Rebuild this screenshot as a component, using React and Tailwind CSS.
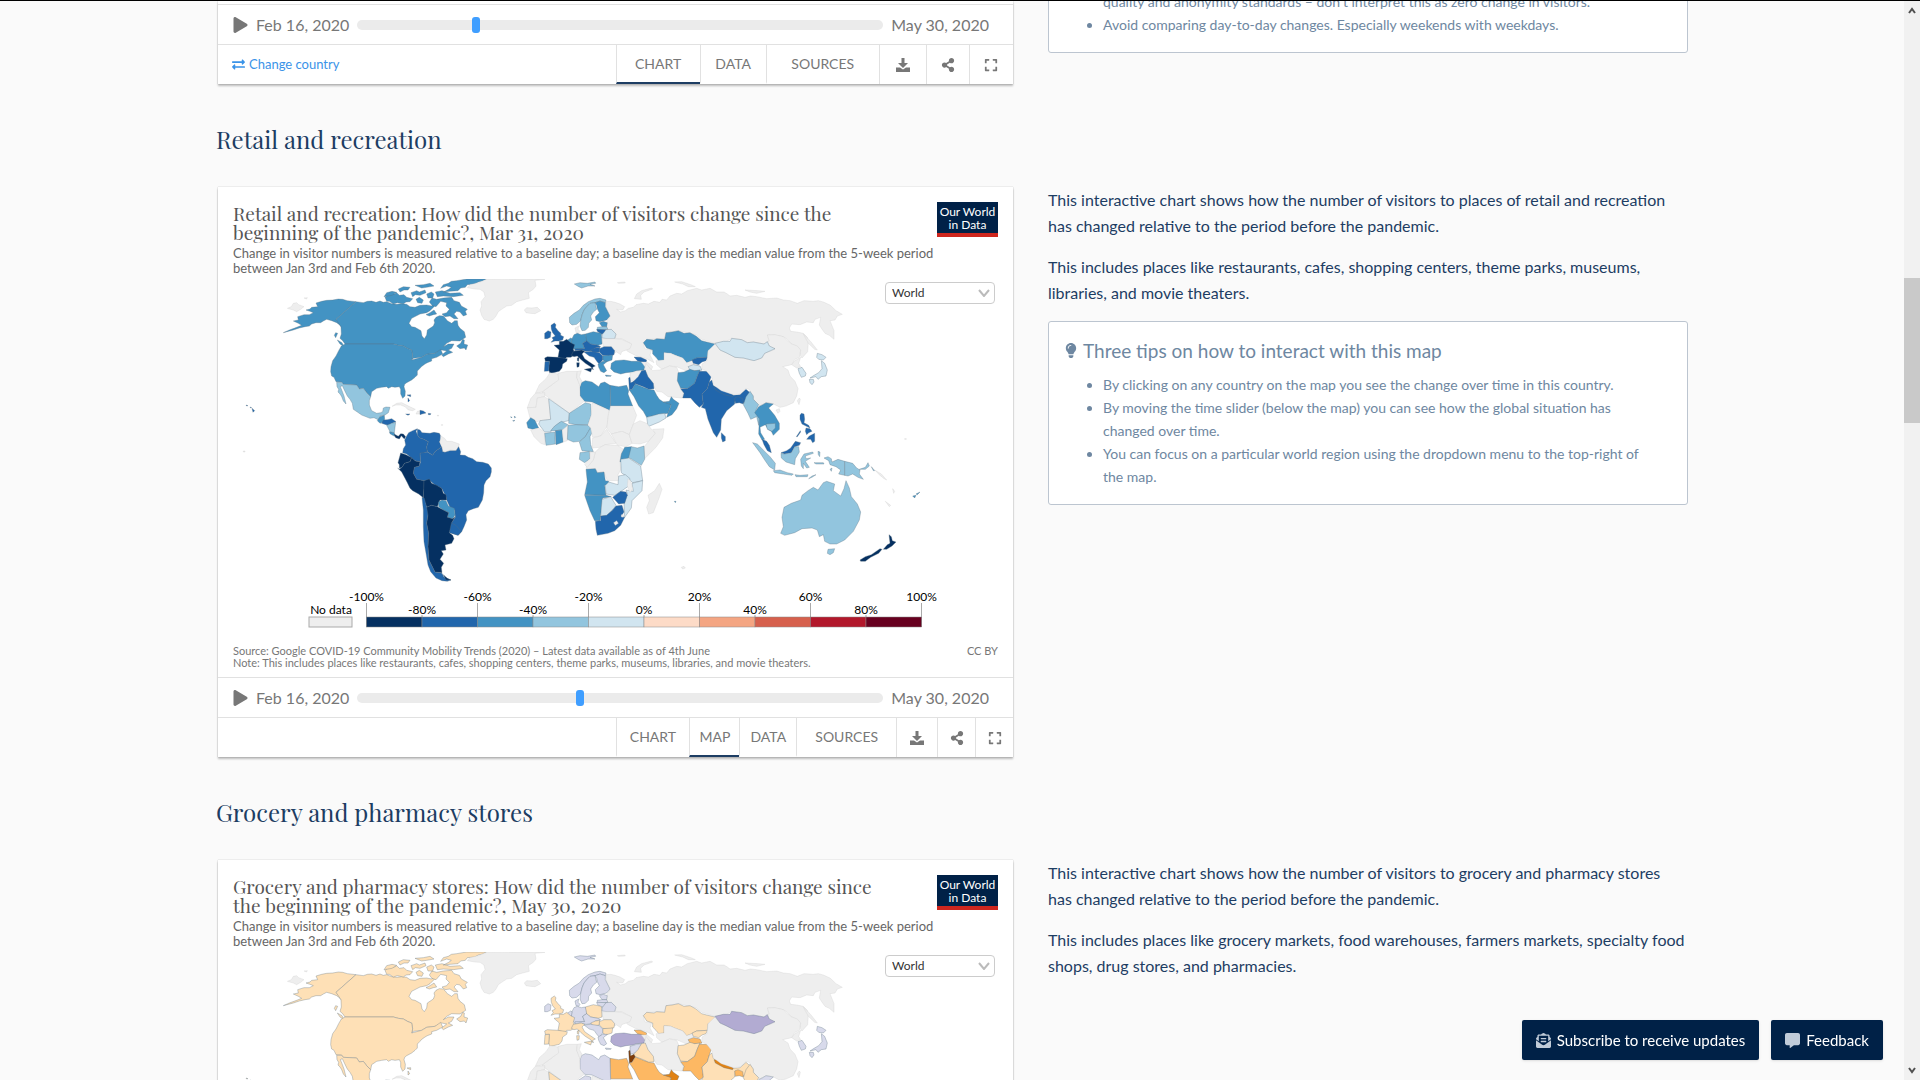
import { useId, useState } from "react";
import { FaPlay, FaShareAlt, FaExpand, FaExchangeAlt, FaLightbulb, FaEnvelopeOpenText, FaCommentAlt } from "react-icons/fa";

const BLUES = {
  n: "#eeeeee",
  a: "#053061",
  b: "#2166ac",
  c: "#4393c3",
  d: "#92c5de",
  e: "#d1e5f0",
};

const ORANGES = {
  n: "#eeeeee",
  p: "#b2abd2",
  q: "#d8daeb",
  r: "#fee0b6",
  s: "#fdb863",
  t: "#e08214",
  u: "#7f3b08",
};

// [retail bin, grocery bin, outline]
const AMERICAS = [
  ["c", "r", "M258 99L275 94 290 91 308 90 325 87 338 88 352 92 378 95 318 148 333 163 341 172 338 178 330 166 320 158 305 152 290 148 280 153 272 158 258 158 245 162 238 168 225 170 208 174 190 180 160 188 178 180 200 172 215 166 205 160 190 153 205 150 203 140 222 134 238 134 250 128 240 124 228 120 240 117 245 112 263 110Z"],
  ["c", "r", "M378 95L400 98 412 94 425 93 438 97 450 93 460 97 470 95 485 101 500 103 515 101 530 103 540 110 555 112 570 106 590 105 605 108 612 98 618 104 600 122 590 128 570 132 545 145 537 160 545 170 555 172 573 182 576 198 583 206 590 195 592 180 610 168 614 158 612 150 618 142 628 137 640 138 645 143 652 152 665 160 674 152 682 152 684 166 690 175 703 185 707 202 690 213 665 212 650 220 640 230 655 222 672 222 665 235 655 240 668 247 655 252 640 260 635 255 650 243 635 240 615 250 590 253 575 262 550 265 545 270 548 258 545 240 534 236 520 228 505 226 490 222 345 222 338 212 330 205 334 192 333 170 318 148Z"],
  ["c", "r", "M680 228L692 220 698 208 703 210 702 222 713 225 708 240 703 234 690 236Z"],
  ["c", "r", "M322 210L336 218 342 230 330 222ZM317 188L323 190 317 203 313 196Z"],
  ["c", "r", "M598 96L606 84 620 88 640 84 665 82 672 92 688 97 694 108 712 118 706 124 710 134 700 138 690 126 680 124 672 132 684 146 672 146 660 138 645 140 636 132 650 128 658 118 648 108 650 98 632 94 618 110 606 106ZM612 120L620 132 610 134 598 138 588 134 600 128Z"],
  ["c", "r", "M465 82L482 70 492 72 500 68 508 76 522 74 530 82 548 86 540 95 528 96 520 102 502 98 490 102 478 94 470 94Z"],
  ["c", "r", "M462 80L470 68 486 64 500 67 486 76ZM505 57L520 50 540 52 534 60 522 60 510 66ZM543 68L560 62 568 66 585 60 588 68 570 76 556 74 548 80ZM555 46L580 44 600 40 612 48 590 52 575 54ZM590 72L604 66 612 72 608 84 594 84ZM558 88L568 82 580 90 576 100 563 98ZM616 66L636 62 660 70 690 68 700 76 670 80 640 78 622 80Z"],
  ["c", "r", "M632 55L640 44 655 40 664 34 680 32 710 27 770 27 758 33 745 36 734 42 712 44 706 52 692 54 684 62 660 64 640 66 656 58 664 52 650 48Z"],
  ["n", "n", "M772 27L945 28 915 31 918 48 910 58 895 68 898 85 878 90 860 95 845 106 830 108 815 118 805 125 798 138 790 148 778 153 762 148 755 136 750 120 755 108 753 95 765 80 762 66 750 58 735 57 712 53 720 44 745 38Z"],
  ["n", "n", "M172 115L184 110 190 100 200 98 206 104 222 110 212 118 200 125 190 120Z"],
  ["c", "r", "M345 222L490 222 505 226 520 228 534 236 545 240 548 258 545 270 575 262 590 253 615 250 632 238 638 252 620 262 605 266 605 273 592 278 585 282 574 290 570 295 562 303 562 315 555 322 545 330 530 338 524 343 522 350 526 364 525 378 518 385 512 372 512 358 508 350 495 352 485 350 475 355 470 350 455 352 440 355 425 365 422 380 410 368 400 355 388 357 380 345 340 343 335 336 318 335 312 322 305 318 302 305 303 290 308 272 318 258 326 242 334 228Z"],
  ["d", "r", "M320 337L335 337 340 343 380 345 388 357 400 355 410 368 422 380 418 392 418 405 425 422 440 430 452 428 458 425 460 414 468 411 480 412 475 428 465 435 450 438 446 450 432 443 420 445 395 435 382 426 370 418 367 400 360 388 352 378 344 362 337 347 331 350 336 362 342 378 348 402 340 393 335 380 330 372 324 366 326 358 321 350Z"],
  ["c", "r", "M442 452L450 440 463 436 464 448 460 456 450 460ZM478 485L492 487 497 500 488 496 480 491Z"],
  ["b", "r", "M460 450L472 449 485 446 498 455 485 460 478 466 468 464 455 460Z"],
  ["d", "r", "M470 466L485 460 497 457 493 488 480 485Z"],
  ["a", "r", "M492 492L505 499 512 491 520 492 527 500 523 507 514 497 508 507 497 503Z"],
  ["n", "n", "M486 409L500 400 515 398 535 408 556 418 548 422 535 420 525 410 512 405 498 405ZM562 424L570 422 570 432 558 432Z"],
  ["b", "r", "M570 421L580 423 588 429 576 432 570 434ZM595 430L603 431 601 434 595 434ZM527 432L540 432 534 436ZM531 375L542 374 542 380 535 377ZM534 384L539 392 534 396ZM66 415L74 422 69 427ZM60 411L65 413 62 414ZM48 405L54 407 50 408Z"],
  ["b", "r", "M562 476L558 484 562 494 568 503 582 508 595 515 590 530 592 545 580 550 570 550 572 575 555 572 545 565 530 552 518 548 520 536 527 525 524 510 530 498 536 488 548 482Z"],
  ["b", "r", "M562 478L570 480 576 488 600 490 612 487 628 490 632 498 635 505 628 515 635 530 615 545 608 556 592 545 590 530 595 515 582 508 568 503 562 494Z"],
  ["n", "n", "M632 497L645 506 650 514 665 514 688 522 684 534 678 542 660 540 645 547 637 542 635 530 630 516Z"],
  ["b", "r", "M572 575L570 550 592 546 608 556 615 545 635 530 638 545 645 547 660 542 678 542 686 530 692 545 690 555 705 556 715 562 728 566 740 575 758 577 775 582 784 594 784 606 780 620 768 632 762 645 761 668 757 690 745 712 730 716 715 722 708 734 710 750 702 770 695 785 685 796 672 792 658 786 662 762 676 742 674 720 660 712 650 690 648 680 642 668 635 655 615 645 600 632 582 632 560 628 550 610 553 592 568 588Z"],
  ["b", "r", "M662 758L678 766 694 784 684 796 672 792 658 788Z"],
  ["a", "r", "M512 549L528 554 545 563 540 575 524 580 516 592 508 595 508 584 504 578Z"],
  ["a", "r", "M508 598L516 592 524 580 540 575 545 563 556 573 570 575 568 588 553 592 550 610 560 628 582 632 582 655 580 683 566 672 548 662 540 655 532 638 525 625 515 606 503 594Z"],
  ["a", "r", "M582 632L598 627 605 640 620 646 635 655 640 670 648 674 650 690 630 690 622 710 604 706 590 712 584 695 580 683Z"],
  ["c", "r", "M625 696L636 690 648 692 655 708 673 715 675 736 668 746 652 742 656 728 640 720 626 710Z"],
  ["b", "r", "M576 682L583 685 590 712 597 714 594 735 590 760 596 790 594 830 597 870 608 892 615 906 636 910 642 922 663 930 652 934 636 932 618 924 602 905 594 885 588 850 582 815 580 770 580 720Z"],
  ["a", "r", "M590 712L604 706 622 710 640 720 656 728 652 742 668 746 676 740 664 760 658 788 668 796 672 806 665 820 645 825 648 840 634 842 640 852 630 868 641 880 634 892 636 908 615 906 608 892 597 870 594 830 596 790 590 760 594 735ZM640 914L652 925 663 930 648 930Z"],
  ["n", "n", "M622 436h4v2h-4ZM634 464h4v2h-4ZM40 543h5v3h-5ZM222 84L232 83 230 87Z"],
];

const EUROPE_AFRICA = [
  ["n", "n", "M318 95L332 94 345 97 360 102 374 110 368 120 350 118 362 126 376 122 385 115 400 112 408 104 430 100 445 102 462 94 480 97 486 88 500 90 510 78 530 70 545 72 562 62 590 55 605 60 630 55 650 66 672 66 682 72 690 78 710 76 735 82 752 78 770 80 800 86 830 84 850 90 870 92 892 100 912 92 940 94 955 92 970 96 990 105 1008 122 1027 133 1012 138 1005 150 990 152 1002 182 1002 208 988 196 975 190 965 176 958 165 962 142 945 148 940 158 920 156 900 164 875 162 868 174 872 184 890 186 910 190 922 202 925 215 923 245 906 264 900 256 902 240 888 228 875 222 862 208 850 200 820 194 802 195 808 215 792 222 760 216 742 218 725 209 695 205 680 214 645 220 605 208 588 194 570 190 535 182 498 188 494 206 440 208 430 218 434 236 455 240 450 255 462 278 440 266 410 258 390 248 380 242 395 222 365 206 345 205 350 192 335 180 318 178 320 156 330 140 320 120Z"],
  ["n", "n", "M403 86L410 72 425 62 455 54 458 57 432 66 422 76 424 88ZM524 36L545 35 575 45 586 50 565 50 548 42ZM352 38L374 36 376 39 356 40ZM735 60L775 62 795 64 770 70 750 66ZM910 192L930 212 952 240 944 238 925 220Z"],
  ["n", "n", "M73 120L80 113 95 114 112 112 122 122 105 131 90 130 78 128Z"],
  ["d", "q", "M223 42L240 38 262 40 285 36 287 40 270 43 285 48 264 48 245 54 236 50Z"],
  ["b", "r", "M153 166L163 159 168 164 166 172 174 182 182 190 182 196 191 200 188 210 176 213 165 213 153 217 160 209 156 203 166 198 158 188 154 178Z"],
  ["b", "q", "M134 190L144 182 153 186 151 202 142 206 134 206Z"],
  ["d", "q", "M208 142L222 130 238 120 250 106 265 95 285 87 300 85 318 90 316 98 300 93 285 98 270 100 262 108 252 120 246 135 242 152 230 163 216 165 209 158Z"],
  ["d", "q", "M242 152L246 135 252 120 262 108 270 100 285 98 290 118 280 126 272 138 275 150 266 160 265 172 256 181 246 182 240 168Z"],
  ["c", "q", "M285 98L300 93 316 98 316 110 324 126 330 138 320 150 300 155 288 152 286 140 298 128 292 116 290 106Z"],
  ["n", "q", "M228 188L225 174 236 168 234 178 240 184 236 190Z"],
  ["c", "q", "M298 158L310 154 322 158 320 170 306 170Z"],
  ["d", "q", "M292 172L306 170 320 170 324 178 292 180Z"],
  ["b", "q", "M290 178L318 179 314 190 304 193 292 184Z"],
  ["e", "q", "M305 204L308 192 318 179 334 178 348 192 344 206 322 206Z"],
  ["n", "n", "M305 206L344 206 365 208 395 222 390 236 365 245 362 254 350 246 340 250 326 232 310 230Z"],
  ["c", "r", "M256 192L280 185 304 190 306 222 294 226 272 222 258 212Z"],
  ["c", "q", "M216 206L222 194 232 190 244 194 256 192 260 212 248 220 254 236 236 238 222 238 212 224Z"],
  ["c", "q", "M200 212L212 204 216 206 214 224 204 220Z"],
  ["b", "q", "M248 220L260 212 272 222 294 226 302 230 286 234 278 242 258 244 240 240 224 242 226 236 254 236Z"],
  ["b", "r", "M272 240L286 234 300 232 298 246 280 250Z"],
  ["b", "r", "M298 236L312 230 334 230 344 242 342 254 326 258 308 256 298 246Z"],
  ["c", "r", "M308 257L338 255 336 270 318 276 308 270Z"],
  ["b", "q", "M252 246L272 244 298 248 308 258 308 270 298 282 292 276 282 262 268 258Z"],
  ["c", "q", "M294 282L308 274 322 274 310 284 320 302 312 308 302 304 296 292ZM316 315L334 317 332 319 318 319Z"],
  ["a", "r", "M162 226L178 224 178 214 190 214 200 208 212 218 224 224 220 238 226 254 212 262 200 262 194 268 174 262 178 240Z"],
  ["a", "r", "M134 264L142 260 174 262 202 266 200 274 188 282 186 294 178 304 160 308 150 310 146 300 148 274 136 274Z"],
  ["b", "r", "M135 275L148 274 146 303 133 304 134 290Z"],
  ["a", "r", "M214 256L220 244 244 240 254 244 246 252 254 266 268 276 286 288 278 292 280 300 272 290 256 280 242 268 232 258 222 260ZM253 298L276 294 272 306ZM230 278L238 278 237 290 231 292ZM232 264L237 262 236 274 232 272Z"],
  ["c", "p", "M334 280L346 272 372 270 395 274 424 274 436 284 432 300 410 302 398 306 378 308 362 312 342 306 332 296Z"],
  ["b", "s", "M402 261L422 262 440 270 438 278 412 272Z"],
  ["n", "n", "M424 276L442 276 458 290 454 300 436 292Z"],
  ["c", "r", "M430 218L440 208 462 210 470 206 494 208 498 188 516 186 535 182 552 190 570 188 588 198 605 212 620 216 645 222 640 236 624 242 622 262 590 264 576 272 560 278 548 264 526 256 512 250 492 248 492 270 476 272 468 262 458 252 458 240 440 234Z"],
  ["n", "n", "M468 272L492 270 492 248 512 250 526 256 548 264 560 278 578 272 580 282 600 290 604 302 584 302 570 308 548 298 530 290 508 288 486 298 470 284Z"],
  ["b", "r", "M576 270L590 264 622 262 618 272 606 276 596 284 580 280Z"],
  ["e", "s", "M564 290L580 284 600 288 606 300 590 302 572 302Z"],
  ["n", "n", "M438 280L456 302 480 300 508 288 530 292 536 306 532 330 540 352 550 370 546 384 524 382 504 380 486 366 470 364 456 340 442 318 434 298Z"],
  ["c", "r", "M534 308L552 306 570 298 584 302 600 300 592 318 584 340 562 356 542 354 532 332Z"],
  ["b", "r", "M412 318L424 302 436 300 444 320 460 340 462 356 446 358 430 350 398 338Z"],
  ["n", "q", "M390 310L410 304 424 302 414 320 404 330 390 334Z"],
  ["b", "u", "M386 324L390 322 392 338 402 334 406 342 396 358 388 360Z"],
  ["c", "s", "M388 360L396 358 406 342 430 352 446 358 462 360 470 376 478 388 490 396 514 402 504 430 476 434 456 438 440 442 430 424 416 408 402 380Z"],
  ["c", "t", "M490 396L508 394 514 380 520 388 537 400 530 416 516 434 500 442 504 430 514 404Z"],
  ["e", "s", "M440 442L456 438 476 432 494 430 498 444 478 456 444 470Z"],
  ["c", "s", "M330 346L356 350 380 346 386 362 384 372 398 408 332 408Z"],
  ["c", "q", "M240 352L244 338 256 332 276 336 296 350 302 340 314 336 330 346 332 422 276 396 254 394 240 378Z"],
  ["n", "n", "M174 310L200 304 232 304 230 322 238 338 240 378 252 394 208 430 136 376 126 366 164 338Z"],
  ["n", "n", "M232 304L244 302 238 320 246 334 240 348 230 322Z"],
  ["n", "n", "M150 308L174 312 176 330 164 338 126 366 106 370 118 344 138 326Z"],
  ["n", "n", "M106 370L134 368 134 380 112 384 108 412 82 413 92 386Z"],
  ["n", "n", "M82 413L108 412 112 384 134 380 146 388 152 448 120 452 108 456 90 444Z"],
  ["e", "r", "M146 386L208 430 206 452 178 458 160 474 152 486 134 486 116 462 120 452 152 448Z"],
  ["d", "q", "M208 430L256 398 272 402 274 434 264 464 228 464 206 460Z"],
  ["d", "r", "M152 482L164 468 184 454 204 464 194 478 168 482Z"],
  ["c", "r", "M80 458L92 443 104 450 116 474 98 478 84 474Z"],
  ["n", "n", "M92 480L116 474 134 486 134 524 122 520 102 500Z"],
  ["d", "r", "M134 490L164 486 166 522 138 526Z"],
  ["c", "r", "M166 482L186 480 190 516 168 524Z"],
  ["n", "n", "M187 480L204 466 202 512 190 516Z"],
  ["d", "r", "M204 466L228 464 264 466 272 474 256 500 240 514 220 516 202 508Z"],
  ["d", "r", "M238 516L256 500 272 472 276 488 270 500 272 524 280 545 246 542Z"],
  ["d", "r", "M240 548L268 544 270 566 254 578 238 568Z"],
  ["n", "n", "M276 398L326 420 322 468 302 498 278 502 272 474 264 464 274 434Z"],
  ["n", "n", "M332 408L398 408 410 436 400 462 388 494 366 484 334 492 320 474 326 430Z"],
  ["n", "n", "M278 504L302 498 320 478 348 520 316 524 300 532 276 534Z"],
  ["n", "n", "M334 492L366 484 388 494 396 520 378 530 352 526Z"],
  ["n", "n", "M400 462L420 452 440 460 458 482 466 490 446 514 420 522 396 520 388 494Z"],
  ["n", "n", "M458 478L492 476 488 504 468 532 434 566 432 530 446 514 466 490Z"],
  ["n", "n", "M286 546L300 532 316 524 352 526 368 536 360 572 362 600 354 614 356 632 322 632 312 606 292 608 288 598 260 598 258 590 280 570Z"],
  ["n", "n", "M254 584L270 566 270 546 286 546 280 570 262 592Z"],
  ["c", "r", "M364 552L374 532 394 530 396 546 384 566 360 576Z"],
  ["d", "r", "M394 530L412 534 432 528 434 568 424 586 386 562Z"],
  ["e", "r", "M362 568L386 564 422 588 428 632 398 638 378 618 364 608Z"],
  ["c", "r", "M258 598L286 596 292 608 312 606 316 632 326 634 326 644 314 646 318 676 254 674 262 636Z"],
  ["c", "r", "M254 676L318 676 334 680 308 684 300 752 284 752 270 722Z"],
  ["e", "r", "M316 646L326 636 354 644 356 618 376 614 390 626 386 648 366 662 344 676 318 672Z"],
  ["e", "r", "M428 632L426 662 396 692 394 714 374 742 372 702 382 672 378 660 400 664 396 640Z"],
  ["n", "r", "M384 626L392 632 398 656 390 668 382 648Z"],
  ["b", "r", "M338 682L362 664 378 666 382 676 374 700 356 702Z"],
  ["e", "r", "M306 688L332 680 348 706 338 720 320 736 302 740Z"],
  ["b", "r", "M286 754L302 752 302 738 320 736 338 720 348 708 366 706 372 726 364 738 374 742 362 766 344 782 324 790 292 796 288 778Z"],
  ["n", "r", "M341 758L350 752 355 760 346 766ZM364 734L370 734 370 742 364 741Z"],
  ["n", "n", "M440 712L448 692 444 676 464 662 478 640 486 658 478 682 460 728 446 732Z"],
  ["b", "s", "M548 384L552 370 542 356 562 356 584 340 592 318 598 304 620 304 634 318 628 336 622 356 606 372 610 402 598 412 584 398 572 384Z"],
  ["b", "r", "M610 402L606 372 622 356 628 336 636 330 640 346 664 362 700 376 720 374 738 358 750 368 740 386 736 408 726 392 706 384 704 402 680 422 664 448 662 480 650 502 640 488 624 448 616 416 604 412Z"],
  ["b", "t", "M642 350L656 350 676 364 700 374 698 380 672 374 646 360Z"],
  ["b", "s", "M704 384L714 380 728 386 730 402 718 398 706 400Z"],
  ["b", "r", "M664 488L676 500 676 512 668 516 664 504Z"],
  ["c", "r", "M32 440L36 442 34 444ZM43 438L47 442 44 444ZM38 452L45 451 41 454ZM523 694L528 694 526 698Z"],
  ["n", "n", "M544 892L552 889 556 894 548 897Z"],
];

const ASIA_PACIFIC = [
  ["n", "n", "M65 296L66 282 82 272 84 242 105 222 120 240 138 248 165 262 190 264 222 272 245 264 254 250 285 238 268 228 262 215 268 213 262 195 285 194 310 200 322 212 335 222 352 228 362 240 358 262 345 268 335 284 308 290 324 300 330 318 345 334 354 356 350 378 340 398 318 408 300 412 292 408 276 400 258 398 240 408 224 392 214 372 208 358 196 356 180 372 160 374 124 362 100 345 96 324 80 304Z"],
  ["e", "p", "M105 220L130 214 150 214 155 205 185 209 202 218 220 216 252 222 262 215 268 228 285 236 272 242 254 250 245 264 222 272 190 264 165 262 138 248 120 240Z"],
  ["n", "n", "M335 284L345 272 362 262 356 280 362 290 350 294Z"],
  ["e", "q", "M354 296L366 292 378 310 376 318 364 322 358 310Z"],
  ["e", "q", "M410 262L412 250 426 254 438 262 430 270 416 268ZM424 272L434 280 442 300 438 318 424 320 414 328 408 320 390 324 402 316 416 308 426 296ZM388 328L400 328 402 336 396 344 390 338Z"],
  ["n", "n", "M352 392L358 384 361 388 357 404ZM288 420L298 416 300 424 294 430Z"],
  ["d", "r", "M190 404L198 380 210 364 220 378 220 388 236 404 228 420 238 446 236 466 230 440 212 448 204 430Z"],
  ["c", "q", "M224 428L236 410 248 404 258 398 280 402 266 414 284 436 298 460 298 478 280 496 274 484 264 478 256 464 240 472 242 488 254 508 246 510 236 492 238 446Z"],
  ["d", "r", "M258 462L286 460 286 474 276 484 262 478Z"],
  ["b", "r", "M246 508L260 514 268 526 274 548 262 542 252 524ZM303 548L320 542 332 534 346 514 362 518 358 526 344 530 334 548 314 552Z"],
  ["d", "r", "M303 550L314 552 334 548 344 530 356 530 358 546 346 566 344 584 318 576 304 564Z"],
  ["d", "r", "M218 518L232 522 252 542 270 560 286 580 284 600 268 590 254 570 240 548ZM280 602L300 600 322 608 340 612 336 616 310 612 284 608ZM345 614L360 616 384 614 382 620 348 620ZM386 626L396 618 408 614 396 622ZM362 568L372 552 398 546 400 550 376 558 378 566 392 564 376 574 388 592 380 594 370 580 370 596 364 588ZM414 544L420 546 419 560 415 554ZM402 578L430 578 432 582 408 582Z"],
  ["d", "r", "M432 564L444 560 454 566 456 576 474 568 494 574 494 616 476 612 482 600 468 590 450 584 446 572Z"],
  ["d", "r", "M494 574L518 580 530 594 540 600 538 612 550 628 534 622 518 612 504 618 494 616ZM538 598L556 592 564 578 568 588 556 598ZM574 590L584 602 580 602ZM450 598L456 594 454 604Z"],
  ["b", "r", "M360 436L364 430 372 432 374 448 372 458 386 466 390 474 378 468 366 462 360 448ZM378 474L390 476 396 484 386 488 380 494 376 484ZM380 508L388 498 404 490 404 514 398 518 392 508ZM349 500L361 482 362 486 352 500Z"],
  ["d", "r", "M302 790L310 770 306 742 312 712 334 700 362 690 366 676 384 662 400 652 414 660 430 638 440 634 464 642 460 662 482 678 492 656 498 632 508 654 514 680 532 702 542 726 538 750 520 784 494 810 470 822 450 822 434 814 430 794 418 800 412 780 396 774 366 776 344 788 314 796Z"],
  ["d", "r", "M444 838L464 836 460 848 450 854 442 850Z"],
  ["a", "r", "M540 870L556 860 574 854 600 836 606 838 596 850 572 862 556 874 542 874ZM610 838L622 824 630 820 627 794 634 800 637 812 648 816 636 828 620 838Z"],
  ["n", "n", "M584 600L604 612 620 630 612 626 598 614ZM616 694L632 706 628 710ZM638 656L644 664 641 670ZM674 506h5v2h-5Z"],
  ["c", "r", "M698 678L708 676 704 684ZM708 672L720 666 712 674Z"],
];

const SECTIONS = [
  {
    name: "Retail and recreation",
    title: "Retail and recreation: How did the number of visitors change since the beginning of the pandemic?, Mar 31, 2020",
    note: "Note: This includes places like restaurants, cafes, shopping centers, theme parks, museums, libraries, and movie theaters.",
    palette: BLUES,
    bin: 0,
    day: 44,
    text: [
      "This interactive chart shows how the number of visitors to places of retail and recreation has changed relative to the period before the pandemic.",
      "This includes places like restaurants, cafes, shopping centers, theme parks, museums, libraries, and movie theaters.",
    ],
    tips: [
      "By clicking on any country on the map you see the change over time in this country.",
      "By moving the time slider (below the map) you can see how the global situation has changed over time.",
      "You can focus on a particular world region using the dropdown menu to the top-right of the map.",
    ],
  },
  {
    name: "Grocery and pharmacy stores",
    title: "Grocery and pharmacy stores: How did the number of visitors change since the beginning of the pandemic?, May 30, 2020",
    palette: ORANGES,
    bin: 1,
    text: [
      "This interactive chart shows how the number of visitors to grocery and pharmacy stores has changed relative to the period before the pandemic.",
      "This includes places like grocery markets, food warehouses, farmers markets, specialty food shops, drug stores, and pharmacies.",
    ],
  },
];

const LEGEND = ["#053061", "#2166ac", "#4393c3", "#92c5de", "#d1e5f0", "#fddbc7", "#f4a582", "#d6604d", "#b2182b", "#67001f"];

const Region = ({ shapes, palette, bin, transform }) => (
  <g transform={transform}>
    {shapes.map((shape) => (
      <path
        key={shape[2]}
        d={shape[2]}
        fill={palette[shape[bin]]}
        stroke={shape[bin] === "n" ? "#cfcfcf" : "#5b7180"}
        strokeWidth="1"
        strokeLinejoin="round"
      />
    ))}
  </g>
);

const WorldMap = ({ palette, bin }) => (
  <svg viewBox="9 27 2295 915" className="block w-full" role="img" aria-label="World map">
    <Region shapes={EUROPE_AFRICA} palette={palette} bin={bin} transform="translate(810 0)" />
    <Region shapes={ASIA_PACIFIC} palette={palette} bin={bin} transform="translate(1350 0)" />
    <Region shapes={AMERICAS} palette={palette} bin={bin} />
  </svg>
);

const Legend = () => (
  <svg viewBox="0 0 765 40" className="mt-[5px] block w-full font-['Lato',sans-serif] text-[12px]">
    <text x="98" y="25" textAnchor="middle">No data</text>
    <rect x="76" y="28" width="43" height="10" fill="#eee" stroke="#aaa" />
    {Array.from({ length: 11 }, (_, i) => (
      <line key={i} x1={133.5 + i * 55.5} x2={133.5 + i * 55.5} y1={i % 2 ? 26 : 14} y2="38" stroke="#aaa" />
    ))}
    {LEGEND.map((color, i) => (
      <rect key={color} x={133.5 + i * 55.5} y="28" width="55.5" height="10" fill={color} stroke="#888" strokeWidth="0.5" />
    ))}
    {Array.from({ length: 11 }, (_, i) => (
      <text key={i} x={133.5 + i * 55.5} y={i % 2 ? 25 : 12} textAnchor="middle">
        {`${i * 20 - 100}%`}
      </text>
    ))}
  </svg>
);

const Timeline = ({ start }) => {
  const [day, setDay] = useState(start);

  return (
    <div className="flex h-10 items-center border-t border-[#e1e1e1] pr-6 pl-[15px] text-base text-[#777]">
      <button type="button" aria-label="Play" className="mr-2">
        <FaPlay className="h-4 w-[15px]" />
      </button>
      <span>Feb 16, 2020</span>
      <input
        type="range"
        aria-label="Date"
        min="0"
        max="104"
        value={day}
        onChange={(e) => setDay(Number(e.target.value))}
        className="mx-2 h-[10px] min-w-0 flex-1 appearance-none rounded-full bg-[#ebebeb] [&::-webkit-slider-thumb]:h-4 [&::-webkit-slider-thumb]:w-2 [&::-webkit-slider-thumb]:appearance-none [&::-webkit-slider-thumb]:rounded-[3px] [&::-webkit-slider-thumb]:bg-[#3f9eff]"
      />
      <span>May 30, 2020</span>
    </div>
  );
};

const DownloadIcon = ({ className }) => (
  <svg viewBox="0 0 14 14" fill="currentColor" className={className}>
    <path d="M5.500 0h3v5H12L7 10 2 5h3.500zM0 9.500h4l3 2 3-2h4V14H0z" />
  </svg>
);

const Tabs = ({ withMap }) => {
  const names = withMap ? ["CHART", "MAP", "DATA", "SOURCES"] : ["CHART", "DATA", "SOURCES"];
  const active = withMap ? "MAP" : "CHART";
  const icons = [
    ["Download", DownloadIcon],
    ["Share", FaShareAlt],
    ["Full screen", FaExpand],
  ];

  return (
    <div className="flex h-10 border-t border-[#e1e1e1]">
      <div className="flex w-1/2 items-center pl-[14px]">
        {!withMap && (
          <a href="#country" className="flex items-center gap-1 text-[13px] text-[#3a93e8]">
            <FaExchangeAlt className="h-[13px] w-[13px]" />
            Change country
          </a>
        )}
      </div>
      <div
        className={`grid w-1/2 text-sm text-[#777] ${
          withMap
            ? "grid-cols-[74fr_50fr_57fr_100fr_41fr_38fr_38fr]"
            : "grid-cols-[84fr_66fr_113fr_47fr_43fr_44fr]"
        }`}
      >
        {names.map((name) => (
          <button
            key={name}
            type="button"
            className={`border-l border-l-[#e1e1e1] border-b-2 ${name === active ? "border-b-[#1d3d63]" : "border-b-transparent"}`}
          >
            {name}
          </button>
        ))}
        {icons.map(([label, Icon]) => (
          <button key={label} type="button" aria-label={label} className="flex items-center justify-center border-l border-[#e1e1e1]">
            <Icon className="h-[14px] w-[14px]" />
          </button>
        ))}
      </div>
    </div>
  );
};

const ChartCard = ({ section }) => {
  const id = useId();

  return (
    <div className="mr-[3px] ml-0.5 bg-white shadow-[0_0_1px_rgba(0,0,0,0.3),0_2px_2px_rgba(0,0,0,0.25)]">
      <div className="px-[15px] pt-[15px] pb-2">
        <div className="flex h-10 justify-between">
          <h3 className="max-w-[660px] pt-0.5 font-['Playfair_Display','Liberation_Serif',serif] text-[19px] leading-[19px] text-[#555]">
            {section.title}
          </h3>
          <a
            href="#home"
            className="flex h-[35px] w-[61px] flex-col justify-center border-b-4 border-[#ce261e] bg-[#002147] text-center text-[12px] leading-[13px] text-white"
          >
            <span>Our World</span>
            <span>in Data</span>
          </a>
        </div>
        <p className="max-w-[720px] pt-1 text-[13px] leading-[15px] text-[#666]">
          Change in visitor numbers is measured relative to a baseline day; a baseline day is the median value from the 5-week
          period between Jan 3rd and Feb 6th 2020.
        </p>
        <div className="relative mt-[3px]">
          <WorldMap palette={section.palette} bin={section.bin} />
          <label htmlFor={id} className="sr-only">Region</label>
          <select
            id={id}
            className="absolute top-[3px] right-[3px] h-[22px] w-[110px] appearance-none rounded-[4px] border border-[#ccc] bg-white px-1.5 text-[12px] text-[#333]"
          >
            <option>World</option>
          </select>
          <svg viewBox="0 0 12 8" className="pointer-events-none absolute top-[10px] right-2 h-2 w-3" fill="none" stroke="#bbb" strokeWidth="2">
            <path d="M1 1l5 6 5-6" />
          </svg>
        </div>
        {section.note && (
          <>
            <Legend />
            <div className="mt-4 flex justify-between text-[11px] leading-[12px] text-[#777]">
              <p>
                Source: Google COVID-19 Community Mobility Trends (2020) – Latest data available as of 4th June
                <br />
                {section.note}
              </p>
              <a href="#license">CC BY</a>
            </div>
          </>
        )}
      </div>
      {section.note && (
        <>
          <Timeline start={section.day} />
          <Tabs withMap />
        </>
      )}
    </div>
  );
};

const Tips = ({ tips }) => (
  <div className="rounded-[3px] border border-[#bcc5d0] bg-white px-4 pt-[15px] pb-4 text-[#6e87a1]">
    <h4 className="mb-2 flex gap-1.5 text-[19px] leading-[28px]">
      <FaLightbulb className="mt-1.5 h-[15px] w-3" />
      Three tips on how to interact with this map
    </h4>
    <ul className="list-disc pr-5 pl-[38px] text-sm leading-[23px]">
      {tips.map((tip) => (
        <li key={tip}>{tip}</li>
      ))}
    </ul>
  </div>
);

const ScrollBar = () => (
  <div className="flex h-full w-4 shrink-0 flex-col items-center bg-[#f1f1f1] py-1.5 text-[#505050]">
    <svg viewBox="0 0 8 8" className="h-2 w-2" fill="none" stroke="currentColor" strokeWidth="2">
      <path d="M1 6l3-4 3 4" />
    </svg>
    <div className="flex-[263]" />
    <div className="w-full flex-[145] bg-[#c9c9c9]" />
    <div className="flex-[643]" />
    <svg viewBox="0 0 8 8" className="h-2 w-2" fill="none" stroke="currentColor" strokeWidth="2">
      <path d="M1 2l3 4 3-4" />
    </svg>
  </div>
);

const App = () => {
  return (
    <div className="flex h-screen overflow-hidden border-t border-black bg-[#fafafa] font-['Lato',sans-serif] text-[#1d3d63]">
      <main className="min-w-0 flex-1 overflow-hidden">
        <div className="mx-auto max-w-[1472px]">
          <div className="grid grid-cols-[5fr_4fr] items-start gap-8">
            <div className="mr-[3px] ml-0.5 bg-white pt-[3px] shadow-[0_0_1px_rgba(0,0,0,0.3),0_2px_2px_rgba(0,0,0,0.25)]">
              <Timeline start={23} />
              <Tabs />
            </div>
            <div className="-mt-3 rounded-b-[3px] border border-[#bcc5d0] bg-white px-4 pb-4 text-[#6e87a1]">
              <ul className="list-disc pl-[38px] text-sm leading-[23px]">
                <li className="list-none">quality and anonymity standards – don’t interpret this as zero change in visitors.</li>
                <li>Avoid comparing day-to-day changes. Especially weekends with weekdays.</li>
              </ul>
            </div>
          </div>

          {SECTIONS.map((section) => (
            <section key={section.name}>
              <h2 className="mt-[38px] mb-[31px] font-['Playfair_Display','Liberation_Serif',serif] text-2xl leading-[34px]">
                {section.name}
              </h2>
              <div className="grid grid-cols-[5fr_4fr] items-start gap-8">
                <ChartCard section={section} />
                <div>
                  {section.text.map((p) => (
                    <p key={p} className="mb-[15px] text-base leading-[26px]">
                      {p}
                    </p>
                  ))}
                  {section.tips && <Tips tips={section.tips} />}
                </div>
              </div>
            </section>
          ))}
        </div>
      </main>
      <ScrollBar />

      <div className="fixed right-[37px] bottom-5 flex gap-3 text-[15px] text-white">
        <button type="button" className="flex h-10 items-center gap-1.5 rounded-[2px] bg-[#002147] px-[14px] shadow">
          <FaEnvelopeOpenText className="h-[15px] w-[15px] text-[#c0cbd8]" />
          Subscribe to receive updates
        </button>
        <button type="button" className="flex h-10 items-center gap-1.5 rounded-[2px] bg-[#002147] px-[14px] shadow">
          <FaCommentAlt className="h-[15px] w-[15px] text-[#c0cbd8]" />
          Feedback
        </button>
      </div>
    </div>
  );
};

export default App;
